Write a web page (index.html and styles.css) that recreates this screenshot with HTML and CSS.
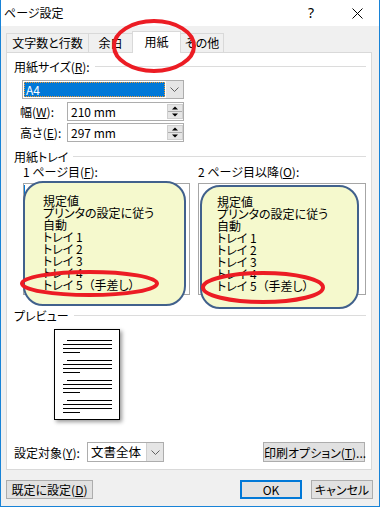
FILE: index.html
```html
<!DOCTYPE html>
<html lang="ja">
<head>
    <meta charset="UTF-8">
    <title>ページ設定</title>
    <link rel="stylesheet" href="styles.css">
</head>
<body>
    <div class="window">
        <div class="titlebar">
            <span class="title">ページ設定</span>
            <span class="help">?</span>
            <svg class="close" width="11" height="11" viewBox="0 0 11 11"><path d="M0.5 0.5L10.5 10.5M10.5 0.5L0.5 10.5" stroke="#000" stroke-width="1"/></svg>
        </div>

        <div class="dialog">
            <div class="tabs">
                <div class="tab t1">文字数と行数</div>
                <div class="tab t2">余白</div>
                <div class="tab t3 active">用紙</div>
                <div class="tab t4">その他</div>
            </div>

            <div class="panel">
                <div class="ghead"><span>用紙サイズ(<u>R</u>):</span><i class="rule"></i></div>
                <div class="combo size">
                    <span class="val">A4</span>
                    <span class="drop"><svg width="9" height="5" viewBox="0 0 9 5"><polyline points="0.5,0.5 4.5,4.5 8.5,0.5" fill="none" stroke="#606060"/></svg></span>
                </div>
                <div class="field">
                    <label>幅(<u>W</u>):</label>
                    <div class="spin"><span>210 mm</span>
                        <svg class="arrows" width="16" height="15" viewBox="0 0 16 15"><rect x="0.5" y="0.5" width="15" height="14" fill="#e5e5e5" stroke="#cfcfcf"/><line x1="1" y1="7.5" x2="15" y2="7.5" stroke="#adadad"/><polygon points="8,2.5 11,5.5 5,5.5" fill="#000"/><polygon points="5,9.5 11,9.5 8,12.5" fill="#000"/></svg>
                    </div>
                </div>
                <div class="field f2">
                    <label>高さ(<u>E</u>):</label>
                    <div class="spin"><span>297 mm</span>
                        <svg class="arrows" width="16" height="15" viewBox="0 0 16 15"><rect x="0.5" y="0.5" width="15" height="14" fill="#e5e5e5" stroke="#cfcfcf"/><line x1="1" y1="7.5" x2="15" y2="7.5" stroke="#adadad"/><polygon points="8,2.5 11,5.5 5,5.5" fill="#000"/><polygon points="5,9.5 11,9.5 8,12.5" fill="#000"/></svg>
                    </div>
                </div>

                <div class="ghead tray-head"><span>用紙トレイ</span><i class="rule"></i></div>
                <div class="trays">
                    <div class="tray">
                        <div class="tray-label">1 ページ目(<u>F</u>):</div>
                        <div class="listbox">
                            <span class="focus-mark"></span>
                            <div class="callout left">
                                <div>規定値</div>
                                <div>プリンタの設定に従う</div>
                                <div>自動</div>
                                <div>トレイ 1</div>
                                <div>トレイ 2</div>
                                <div>トレイ 3</div>
                                <div>トレイ 4</div>
                                <div>トレイ 5 <span class="paren">（手差し）</span></div>
                            </div>
                        </div>
                    </div>
                    <div class="tray">
                        <div class="tray-label">2 ページ目以降(<u>O</u>):</div>
                        <div class="listbox">
                            <div class="callout right">
                                <div>規定値</div>
                                <div>プリンタの設定に従う</div>
                                <div>自動</div>
                                <div>トレイ 1</div>
                                <div>トレイ 2</div>
                                <div>トレイ 3</div>
                                <div>トレイ 4</div>
                                <div>トレイ 5 <span class="paren">（手差し）</span></div>
                            </div>
                        </div>
                    </div>
                </div>

                <div class="ghead preview-head"><span>プレビュー</span><i class="rule"></i></div>
                <div class="page">
                    <svg width="64" height="89" viewBox="0 0 64 89">
                        <g stroke="#000" stroke-width="1">
                            <path d="M12 10.5H57M8 14.5H57M8 18.5H57M8 22.5H25"/>
                            <path d="M12 30.5H57M8 34.5H57M8 38.5H57M8 42.5H25"/>
                            <path d="M12 50.5H57M8 54.5H57M8 58.5H57M8 62.5H25"/>
                            <path d="M12 70.5H57M8 74.5H57M8 78.5H57M8 82.5H25"/>
                        </g>
                    </svg>
                </div>

                <div class="apply-row">
                    <label>設定対象(<u>Y</u>):</label>
                    <div class="combo target">
                        <span class="val">文書全体</span>
                        <span class="drop"><svg width="9" height="5" viewBox="0 0 9 5"><polyline points="0.5,0.5 4.5,4.5 8.5,0.5" fill="none" stroke="#606060"/></svg></span>
                    </div>
                    <button class="btn print-opt">印刷オプション(<u>T</u>)...</button>
                </div>
            </div>

            <div class="buttons">
                <button class="btn default-btn">既定に設定(<u>D</u>)</button>
                <button class="btn ok">OK</button>
                <button class="btn cancel">キャンセル</button>
            </div>
        </div>

        <svg class="marks" width="380" height="507" viewBox="0 0 380 507">
            <g fill="none" stroke="#ec1c24" stroke-width="4">
                <ellipse cx="154" cy="46" rx="40" ry="25"/>
                <ellipse cx="89.5" cy="283.5" rx="67.5" ry="11.5"/>
                <ellipse cx="263" cy="287.5" rx="60" ry="14.5"/>
            </g>
        </svg>
    </div>
</body>
</html>
```

FILE: styles.css
```css
* {
    margin: 0;
    padding: 0;
    box-sizing: border-box;
}

body {
    width: 380px;
    height: 507px;
    background: #fff;
    color: #000;
    font-family: "Noto Sans CJK JP", "Noto Sans", sans-serif;
    font-size: 12px;
    font-feature-settings: "palt";
    overflow: hidden;
}

u {
    text-decoration: underline;
    text-underline-offset: 1px;
}

.window {
    position: relative;
    width: 380px;
    height: 507px;
    border: 1px solid #1883d7;
    border-top: none;
    background: #f0f0f0;
    display: flex;
    flex-direction: column;
}

/* title bar */
.titlebar {
    height: 26px;
    background: #fff;
    display: flex;
    align-items: center;
    padding: 0 16px 0 3px;
}

.title {
    flex: 1;
    line-height: 14px;
}

.help {
    font-family: "Noto Sans", sans-serif;
    font-size: 14px;
    width: 8px;
    margin-right: 36px;
    line-height: 14px;
}

/* dialog body */
.dialog {
    flex: 1;
    display: flex;
    flex-direction: column;
    padding: 0 6px 0 5px;
}

.tabs {
    display: flex;
    align-items: flex-end;
    height: 26px;
}

.tab {
    height: 19px;
    margin-left: -1px;
    border: 1px solid #d9d9d9;
    border-bottom: none;
    background: #f0f0f0;
    display: flex;
    align-items: center;
    justify-content: center;
    line-height: 14px;
}

.tab.t1 { margin-left: 0; width: 83px; }
.tab.t2 { width: 45px; }
.tab.t3 { width: 49px; }
.tab.t4 { width: 44px; }

.tab.active {
    position: relative;
    z-index: 1;
    height: 22px;
    margin-bottom: -1px;
    background: #fff;
    padding-bottom: 2px;
}

.panel {
    height: 418px;
    margin-right: 1px;
    background: #fff;
    border: 1px solid #d9d9d9;
    padding: 5px 5px 0 7px;
    display: flex;
    flex-direction: column;
}

.ghead {
    display: flex;
    align-items: center;
    height: 16px;
}

.ghead .rule {
    flex: 1;
    height: 1px;
    margin-left: 5px;
    background: #dcdcdc;
}

.tray-head {
    margin-top: 6px;
}

.preview-head {
    margin-top: 12px;
}

/* combo boxes */
.combo {
    height: 19px;
    border: 1px solid #adadad;
    background: #fff;
    display: flex;
}

.combo .drop {
    width: 17px;
    background: #e5e5e5;
    display: flex;
    align-items: center;
    justify-content: center;
}

.combo.size {
    width: 162px;
    margin: 6px 0 0 8px;
}

.combo.size .val {
    flex: 1;
    margin: 1px;
    background: #0078d7;
    color: #fff;
    border: 1px dotted #f29a2e;
    padding-left: 1px;
    line-height: 13px;
}

.combo.target {
    width: 77px;
    height: 20px;
}

.combo.target .val {
    flex: 1;
    padding-left: 3px;
    line-height: 18px;
    font-size: 12.5px;
}

.combo.target .drop {
    border-left: 1px solid #cfcfcf;
}

/* spin fields */
.field {
    display: flex;
    align-items: center;
    padding-left: 6px;
    margin-top: 3px;
}

.field.f2 {
    margin-top: 2px;
}

.field label {
    width: 47px;
}

.spin {
    width: 117px;
    height: 19px;
    border: 1px solid #adadad;
    display: flex;
    align-items: center;
    padding-left: 3px;
}

.spin .arrows {
    margin-left: auto;
}

/* paper trays */
.trays {
    display: grid;
    grid-template-columns: 167px 168px;
    column-gap: 8px;
    padding-left: 9px;
}

.tray-label {
    height: 16px;
    line-height: 16px;
}

.listbox {
    position: relative;
    height: 112px;
    margin-top: 3px;
    border: 1px solid #a6a6a6;
    background: #fff;
}

.focus-mark {
    position: absolute;
    left: 0;
    top: 1px;
    width: 1px;
    height: 11px;
    background: #0078d7;
}

.callout {
    position: absolute;
    background: #f5f9cd;
    border: 2px solid #41618c;
    border-radius: 20px;
    line-height: 12px;
    font-size: 12px;
    white-space: nowrap;
}

.callout .paren {
    margin-left: 3px;
}

.callout.left {
    left: -1px;
    top: -3px;
    width: 163px;
    height: 125px;
    padding: 12px 0 0 18px;
}

.callout.right {
    left: 1px;
    top: 1px;
    width: 159px;
    height: 124px;
    padding: 9px 0 0 15px;
}

/* preview */
.page {
    width: 66px;
    height: 91px;
    margin: 6px 0 0 40px;
    border: 1px solid #000;
    background: #fff;
    box-shadow: 2px 2px 4px rgba(0, 0, 0, 0.4);
}

.page svg {
    display: block;
}

/* bottom row */
.apply-row {
    display: flex;
    align-items: center;
    margin-top: 22px;
}

.apply-row label {
    width: 73px;
}

.btn {
    font-family: inherit;
    font-size: 12px;
    font-feature-settings: "palt";
    height: 19px;
    padding: 0;
    background: #e1e1e1;
    border: 1px solid #adadad;
    color: #000;
    line-height: 15px;
    white-space: nowrap;
}

.print-opt {
    width: 102px;
    height: 20px;
    margin-left: auto;
    margin-right: 1px;
}

.buttons {
    display: flex;
    margin-top: 10px;
}

.default-btn {
    width: 87px;
}

.ok {
    width: 62px;
    margin-left: auto;
    border: 2px solid #0078d7;
}

.cancel {
    width: 62px;
    margin-left: 9px;
}

.marks {
    position: absolute;
    left: -1px;
    top: 0;
    pointer-events: none;
}
```
